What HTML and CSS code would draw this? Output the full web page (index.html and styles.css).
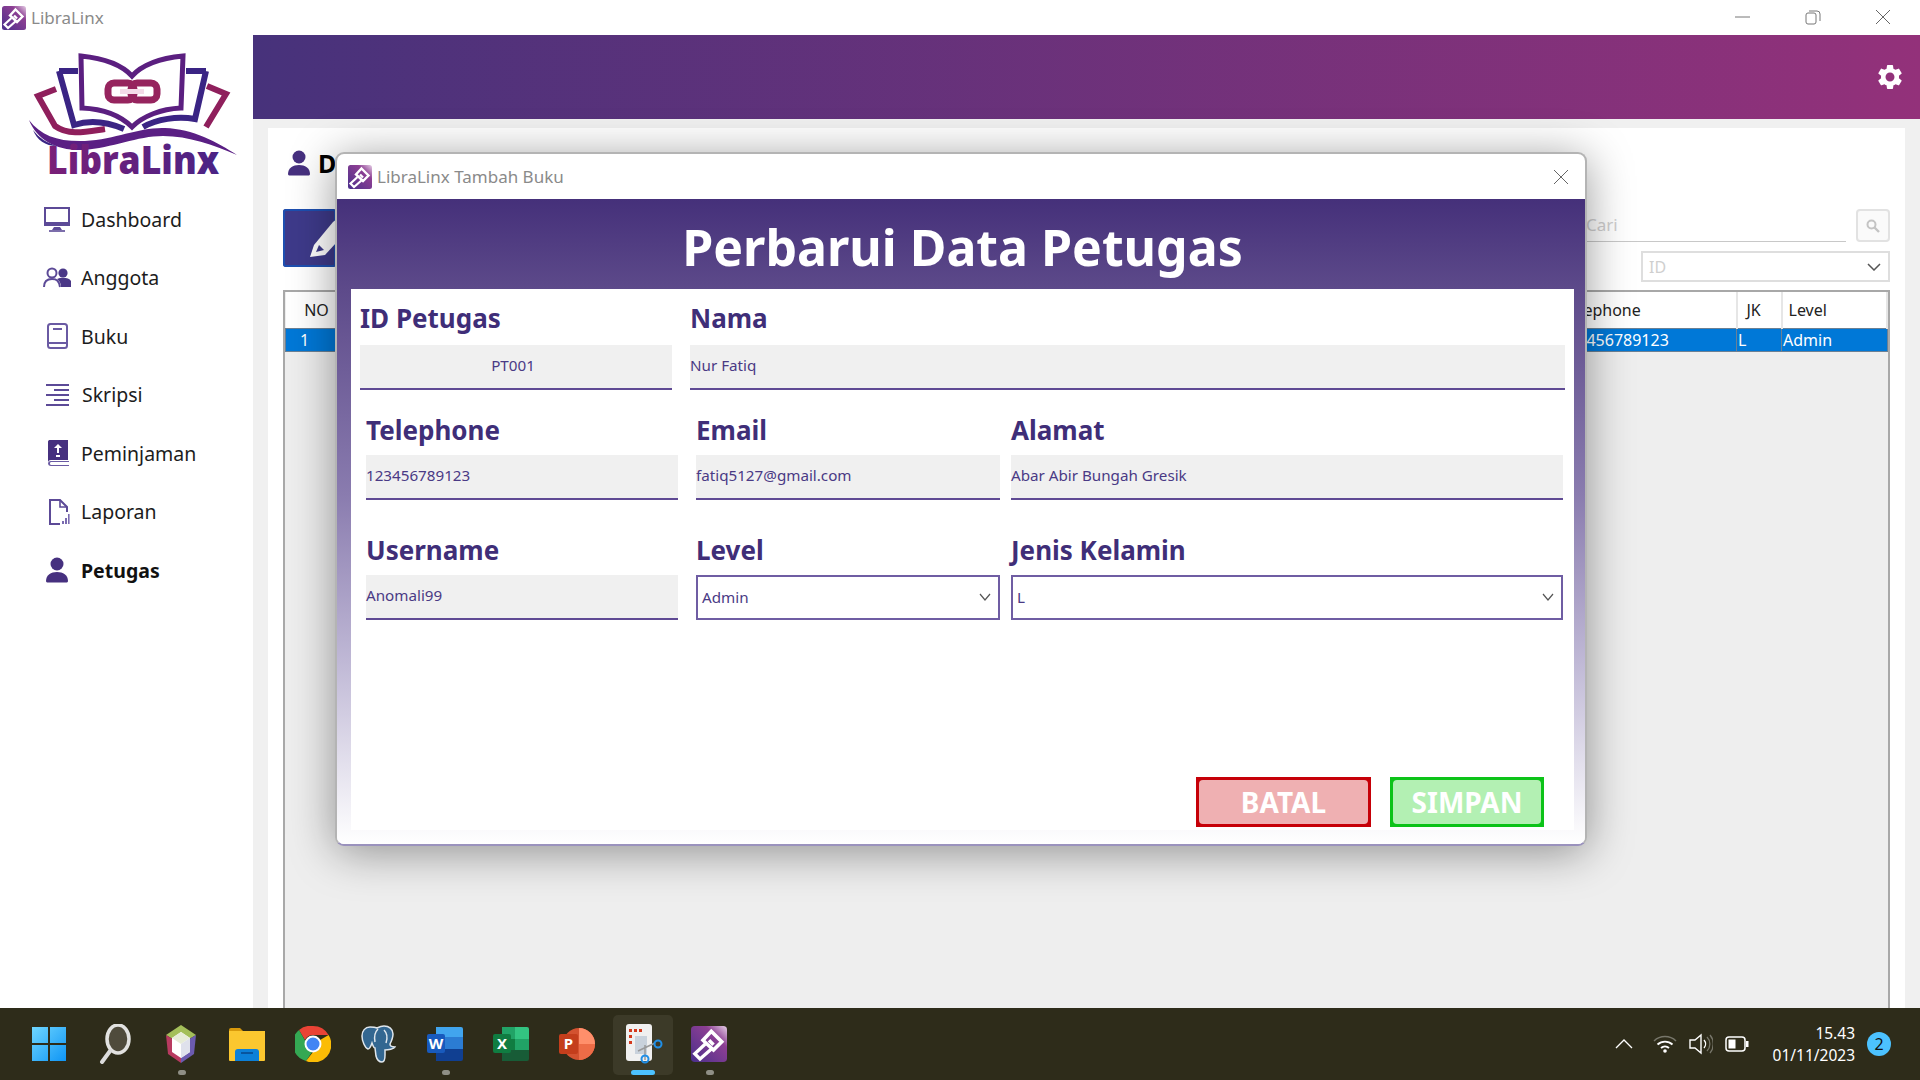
FILE: index.html
```html
<!DOCTYPE html>
<html lang="id">
<head>
    <meta charset="UTF-8">
    <meta name="viewport" content="width=device-width, initial-scale=1.0">
    <title>LibraLinx</title>
    <link rel="stylesheet" href="styles.css">
</head>
<body>

<svg class="defs" width="0" height="0">
    <defs>
        <linearGradient id="gradApp" x1="0" y1="1" x2="1" y2="0">
            <stop offset="0" stop-color="#4a2f8c"/>
            <stop offset=".7" stop-color="#8d3f93"/>
            <stop offset="1" stop-color="#e6cfe6"/>
        </linearGradient>
        <linearGradient id="gradWin" x1="0" y1="0" x2="1" y2="1">
            <stop offset="0" stop-color="#6fd6ff"/>
            <stop offset="1" stop-color="#0f95f5"/>
        </linearGradient>
        <symbol id="appIcon" viewBox="0 0 24 24">
            <rect width="24" height="24" rx="2.5" fill="url(#gradApp)"/>
            <path d="M13.500 3.500L20.500 10.500 15 16 8 9.500z" fill="none" stroke="#fff" stroke-width="2.400"/>
            <path d="M12 9.500l3 3" stroke="#fff" stroke-width="2.400"/>
            <path d="M9.500 12L2.500 18.500l3.500 3.500 8-7" fill="none" stroke="#fff" stroke-width="2.200"/>
        </symbol>
    </defs>
</svg>

<!-- Barra de titulo da janela -->
<div class="titlebar">
    <svg class="appIcon"><use href="#appIcon"/></svg>
    <span class="titleText">LibraLinx</span>
    <div class="winButtons">
        <svg width="16" height="16" viewBox="0 0 16 16"><path d="M0 8h15" stroke="#777" fill="none"/></svg>
        <svg width="16" height="16" viewBox="0 0 16 16"><rect x="1" y="4" width="10" height="11" rx="2" stroke="#777" fill="none"/><path d="M4 2h8a3 3 0 0 1 3 3v7" stroke="#777" fill="none"/></svg>
        <svg width="16" height="16" viewBox="0 0 16 16"><path d="M1 1l14 14M15 1L1 15" stroke="#666" fill="none"/></svg>
    </div>
</div>

<div class="app">
    <div class="sidebar">
        <svg class="logo" width="210" height="136" viewBox="28 50 210 136">
            <defs>
                <linearGradient id="gradLogo" x1="0" y1="0" x2="1" y2="0">
                    <stop offset="0" stop-color="#7a1f78"/>
                    <stop offset="1" stop-color="#4a2385"/>
                </linearGradient>
            </defs>
            <path d="M59 71h19M59 71l15 54c18-6 36-2 50 4M206 71h-20M206 71l-11 48c-18-3-38 0-52 8" fill="none" stroke="#3a2484" stroke-width="6"/>
            <path d="M56 89l-18 7 17 30c14 10 30 6 50 3M207 86l19 8-20 33" fill="none" stroke="#8f1f5c" stroke-width="6"/>
            <path d="M81 56c20 2 40 8 51 20 11-12 30-18 51-20l-2 52c-20 1-38 8-49 19-11-11-29-18-50-19z" fill="#fff" stroke="#5b1f80" stroke-width="5"/>
            <rect x="108" y="83" width="26" height="17" rx="6" fill="none" stroke="#96245e" stroke-width="7"/>
            <rect x="131" y="83" width="26" height="17" rx="6" fill="none" stroke="#96245e" stroke-width="7"/>
            <rect x="120" y="89" width="24" height="5" fill="#f4dbe8"/>
            <path d="M33 130c6 8 14 13 24 16-12 0-20-6-24-16z" fill="#3a2484"/>
            <path d="M29 120c12 16 30 22 56 21 32-2 54-14 80-13 28 1 52 14 72 27-24-10-48-19-74-19-26 0-50 12-80 14-26 1-46-10-54-30z" fill="#5a1f84"/>
            <text class="logoText" x="47" y="174" textLength="172" lengthAdjust="spacingAndGlyphs" fill="url(#gradLogo)">LibraLinx</text>
        </svg>
        <ul class="menu">
            <li>
                <svg class="menuIcon" viewBox="0 0 28 28"><path d="M2 3h24v17H2z" fill="none" stroke="#5c4a97" stroke-width="2"/><path d="M2 17h24v4H2zM9 25h10l-2-3h-6z" fill="#5c4a97"/><path d="M6 26h16" stroke="#5c4a97" stroke-width="1.600"/></svg>
                Dashboard
            </li>
            <li>
                <svg class="menuIcon" viewBox="0 0 28 28"><circle cx="9" cy="9" r="4.500" fill="none" stroke="#5c4a97" stroke-width="2"/><path d="M1 23c0-5 3-8 8-8s7 2 8 8" fill="none" stroke="#5c4a97" stroke-width="2"/><circle cx="20" cy="9" r="4.600" fill="#4a3787"/><path d="M14 15c4-2 12-2 14 2v6H18c0-3-1-6-4-8z" fill="#4a3787"/></svg>
                Anggota
            </li>
            <li>
                <svg class="menuIcon" viewBox="0 0 28 28"><rect x="5" y="2" width="19" height="24" rx="2.500" fill="none" stroke="#6a5aa3" stroke-width="2"/><path d="M10 7h9M5 21h19" stroke="#6a5aa3" stroke-width="2"/></svg>
                Buku
            </li>
            <li>
                <svg class="menuIcon" viewBox="0 0 28 28"><path d="M3 4h23M11 9h15M3 14h23M11 19h15M3 24h23" stroke="#5c4a97" stroke-width="2"/></svg>
                <span class="skripsi">Skripsi</span>
            </li>
            <li>
                <svg class="menuIcon" viewBox="0 0 28 28"><path d="M6 1h19v20H8a3 3 0 0 0-3 3V4a3 3 0 0 1 1-3z" fill="#46307f"/><path d="M5 24a3 3 0 0 1 3-2h18v1H8a1.600 1.600 0 0 0 0 3h18v1H8a3 3 0 0 1-3-3z" fill="#6a5aa3"/><path d="M15 5l4 4h-3v5h-2V9h-3zM13 16h4v2h-4z" fill="#fff"/></svg>
                Peminjaman
            </li>
            <li>
                <svg class="menuIcon" viewBox="0 0 28 28"><path d="M24 14V9l-7-7H7v24h10" fill="none" stroke="#5c4a97" stroke-width="2"/><path d="M17 2v7h7" fill="none" stroke="#5c4a97" stroke-width="1.600"/><path d="M19 23h2v3h-2zM22 20h2v6h-2zM25 16h1.600v10H25z" fill="#7a6bb0"/></svg>
                Laporan
            </li>
            <li class="ativo">
                <svg class="menuIcon" viewBox="0 0 28 28"><circle cx="14" cy="8" r="6.500" fill="#46307f"/><path d="M3 25c0-6 5-9 11-9s11 3 11 9c0 1-1 1.500-2 1.500H5c-1 0-2-.5-2-1.500z" fill="#46307f"/></svg>
                Petugas
            </li>
        </ul>
    </div>

    <div class="main">
        <div class="topbar">
            <svg class="gear" width="30" height="30" viewBox="0 0 24 24"><path fill="#fff" d="M19.140 12.940c.04-.3.06-.61.06-.94 0-.32-.02-.64-.07-.94l2.030-1.580a.49.49 0 0 0 .12-.61l-1.920-3.320a.488.488 0 0 0-.59-.22l-2.390.96c-.5-.38-1.030-.7-1.620-.94l-.36-2.540a.484.484 0 0 0-.48-.41h-3.840c-.24 0-.43.17-.47.41l-.36 2.540c-.59.24-1.130.57-1.620.94l-2.390-.96c-.22-.08-.47 0-.59.22L2.740 8.870c-.12.21-.08.47.12.61l2.030 1.580c-.05.3-.09.63-.09.94s.02.64.07.94l-2.030 1.580a.49.49 0 0 0-.12.61l1.920 3.320c.12.22.37.29.59.22l2.390-.96c.5.38 1.030.7 1.620.94l.36 2.540c.05.24.24.41.48.41h3.840c.24 0 .44-.17.47-.41l.36-2.540c.59-.24 1.130-.56 1.620-.94l2.390.96c.22.08.47 0 .59-.22l1.920-3.320c.12-.22.07-.47-.12-.61l-2.010-1.580zM12 15.600c-1.980 0-3.600-1.620-3.600-3.600s1.620-3.600 3.600-3.600 3.600 1.620 3.600 3.600-1.620 3.600-3.600 3.600z"/></svg>
        </div>
        <div class="content">
            <div class="panel">
                <div class="panelTitle">
                    <svg width="28" height="28" viewBox="0 0 28 28"><circle cx="14" cy="8" r="6.500" fill="#46307f"/><path d="M3 25c0-6 5-9 11-9s11 3 11 9c0 1-1 1.500-2 1.500H5c-1 0-2-.5-2-1.500z" fill="#46307f"/></svg>
                    Data Petugas
                </div>
                <div class="toolbar">
                    <div class="btnEdit">
                        <svg width="54" height="58" viewBox="0 0 54 58"><path d="M27 48L31 36 50 13 54 10V33L42 46z" fill="#fff"/><path d="M33 43l3-7 5 5z" fill="#3e3a8a"/></svg>
                    </div>
                    <div class="filtros">
                        <div class="searchRow">
                            <div class="searchInput">Cari</div>
                            <div class="searchBtn">
                                <svg width="14" height="14" viewBox="0 0 14 14"><circle cx="5.500" cy="5.500" r="4" fill="none" stroke="#c4c4c4" stroke-width="2"/><path d="M8.500 8.500l4.500 4.500" stroke="#c4c4c4" stroke-width="2.400"/></svg>
                            </div>
                        </div>
                        <div class="filterSelect">
                            ID
                            <svg width="14" height="8" viewBox="0 0 14 8"><path d="M1 1l6 6 6-6" fill="none" stroke="#555" stroke-width="1.500"/></svg>
                        </div>
                    </div>
                </div>
                <div class="tableWrap">
                    <table class="tabela">
                        <colgroup>
                            <col class="cNo"><col class="cId"><col class="cNama"><col class="cUser"><col class="cEmail"><col class="cAlamat"><col class="cTel"><col class="cJk"><col>
                        </colgroup>
                        <thead>
                            <!-- colunas do meio ficam atras do dialogo -->
                            <tr><th class="center">NO</th><th></th><th></th><th></th><th></th><th></th><th>Telephone</th><th class="thJk">JK</th><th>Level</th></tr>
                        </thead>
                        <tbody>
                            <tr><td class="center">1</td><td></td><td></td><td></td><td></td><td></td><td>123456789123</td><td>L</td><td>Admin</td></tr>
                        </tbody>
                    </table>
                </div>
            </div>
        </div>
    </div>
</div>

<!-- Janela de dialogo -->
<div class="dialog">
    <div class="dialogBar">
        <svg class="appIcon"><use href="#appIcon"/></svg>
        <span class="titleText">LibraLinx Tambah Buku</span>
        <svg class="dialogClose" width="16" height="16" viewBox="0 0 16 16"><path d="M1 1l14 14M15 1L1 15" stroke="#666" fill="none"/></svg>
    </div>
    <div class="dialogBody">
        <h1 class="dialogTitle">Perbarui Data Petugas</h1>
        <div class="form">
            <div class="row rowTop">
                <div class="field colId">
                    <label>ID Petugas</label>
                    <div class="input center">PT001</div>
                </div>
                <div class="field colNama">
                    <label>Nama</label>
                    <div class="input">Nur Fatiq</div>
                </div>
            </div>
            <div class="row rowMid">
                <div class="field colA">
                    <label>Telephone</label>
                    <div class="input">123456789123</div>
                </div>
                <div class="field colB">
                    <label>Email</label>
                    <div class="input">fatiq5127@gmail.com</div>
                </div>
                <div class="field colC">
                    <label>Alamat</label>
                    <div class="input">Abar Abir Bungah Gresik</div>
                </div>
            </div>
            <div class="row rowLow">
                <div class="field colA">
                    <label>Username</label>
                    <div class="input">Anomali99</div>
                </div>
                <div class="field colB">
                    <label>Level</label>
                    <div class="select">
                        Admin
                        <svg width="12" height="8" viewBox="0 0 12 8"><path d="M1 1l5 6 5-6" fill="none" stroke="#555" stroke-width="1.200"/></svg>
                    </div>
                </div>
                <div class="field colC">
                    <label>Jenis Kelamin</label>
                    <div class="select">
                        L
                        <svg width="12" height="8" viewBox="0 0 12 8"><path d="M1 1l5 6 5-6" fill="none" stroke="#555" stroke-width="1.200"/></svg>
                    </div>
                </div>
            </div>
            <div class="buttons">
                <button class="btn btnBatal" type="button"><span>BATAL</span></button>
                <button class="btn btnSimpan" type="button"><span>SIMPAN</span></button>
            </div>
        </div>
    </div>
</div>

<!-- Barra de tarefas -->
<div class="taskbar">
    <div class="taskItem">
        <svg width="36" height="36" viewBox="0 0 36 36"><path d="M1 1h16v16H1zM19 1h16v16H19zM1 19h16v16H1zM19 19h16v16H19z" fill="url(#gradWin)"/></svg>
    </div>
    <div class="taskItem">
        <svg width="36" height="40" viewBox="0 0 36 40"><ellipse cx="21" cy="15" rx="11" ry="14" fill="#4f4b3c" stroke="#e2e2e0" stroke-width="3.500"/><path d="M13 27L5 38" stroke="#dcdcdc" stroke-width="4" stroke-linecap="round"/></svg>
    </div>
    <div class="taskItem dot">
        <svg width="32" height="38" viewBox="0 0 32 38"><path d="M16 0l15 10-15 9L1 10z" fill="#a4bf5a"/><path d="M1 10l15 9v19L3 29z" fill="#b83a60"/><path d="M31 10L16 19v19l13-9z" fill="#6c5bb0"/><path d="M7 13l9-6 9 6v14l-9 6-9-6z" fill="#fff"/><path d="M7 13l9-6 9 6-9 6z" fill="#e7ecd8"/><path d="M25 13v14l-9 6V19z" fill="#dfe1ec"/></svg>
    </div>
    <div class="taskItem">
        <svg width="36" height="36" viewBox="0 0 36 36"><path d="M0 4a2 2 0 0 1 2-2h9l4 4h-15z" fill="#d99a0c"/><path d="M0 5h36v29a1 1 0 0 1-1 1H1a1 1 0 0 1-1-1z" fill="#fbc72f"/><path d="M6 35V26a3 3 0 0 1 3-3h18a3 3 0 0 1 3 3v9z" fill="#0c80d8"/><path d="M12 27h12" stroke="#08559e" stroke-width="2"/></svg>
    </div>
    <div class="taskItem">
        <svg width="36" height="36" viewBox="0 0 36 36"><path d="M18 0a18 18 0 0 1 15.600 9H18a9 9 0 0 0-8 5L4 4a18 18 0 0 1 14-4z" fill="#ea4335"/><path d="M4 4l8 14a7 7 0 0 0 5 8l-6 9A18 18 0 0 1 4 4z" fill="#34a853"/><path d="M33.600 9A18 18 0 0 1 11 35l7-9a8 8 0 0 0 7-12z" fill="#fbbc05"/><circle cx="18" cy="18" r="7.500" fill="#4285f4" stroke="#fff" stroke-width="2"/></svg>
    </div>
    <div class="taskItem">
        <svg width="36" height="38" viewBox="0 0 36 38"><path d="M9 2c-5 0-8 4-8 9 0 5 3 12 6 13 2 0 3-3 4-6 1 3 2 5 3 5l1 8c1 4 3 6 6 6 2 0 3-3 3-7v-5c3 0 9-1 10-3-3 0-5-1-5-3 2-4 3-7 3-10 0-5-4-8-9-8-3 0-5 1-7 2-2-1-4-1-7-1z" fill="#336791" stroke="#dfe6ec" stroke-width="1.500"/><path d="M17 4c-3 3-4 8-3 13M23 5c3 3 4 7 2 13" fill="none" stroke="#dfe6ec" stroke-width="1.500"/></svg>
    </div>
    <div class="taskItem dot">
        <svg width="36" height="36" viewBox="0 0 36 36"><path d="M9 1h25a2 2 0 0 1 2 2v8H9z" fill="#41a5ee"/><path d="M9 11h27v12H9z" fill="#2b7cd3"/><path d="M9 23h27v10a2 2 0 0 1-2 2H9z" fill="#103f91"/><rect x="0" y="8" width="18" height="19" rx="2" fill="#185abd"/><text class="appLetter" x="9" y="23" text-anchor="middle">W</text></svg>
    </div>
    <div class="taskItem">
        <svg width="36" height="36" viewBox="0 0 36 36"><path d="M9 1h13v12H9z" fill="#21a366"/><path d="M22 1h12a2 2 0 0 1 2 2v10H22z" fill="#33c481"/><path d="M9 13h13v11H9z" fill="#107c41"/><path d="M22 13h14v11H22z" fill="#21a366"/><path d="M9 24h27v9a2 2 0 0 1-2 2H9z" fill="#185c37"/><rect x="0" y="8" width="18" height="19" rx="2" fill="#107c41"/><text class="appLetter" x="9" y="23" text-anchor="middle">X</text></svg>
    </div>
    <div class="taskItem">
        <svg width="36" height="36" viewBox="0 0 36 36"><circle cx="20" cy="18" r="16" fill="#d35230"/><path d="M20 2a16 16 0 0 1 16 16H20z" fill="#ff8f6b"/><path d="M20 18h16a16 16 0 0 1-16 16z" fill="#ed6c47"/><rect x="0" y="8" width="19" height="20" rx="2" fill="#c43e1c"/><text class="appLetter" x="9.500" y="23" text-anchor="middle">P</text></svg>
    </div>
    <div class="taskItem active">
        <svg width="40" height="40" viewBox="0 0 40 40"><rect x="3" y="0" width="26" height="37" rx="3" fill="#f0f0f0"/><path d="M6 5h3v3H6zM11 5h3v3h-3zM16 5h3v3h-3zM6 11h3v3H6zM6 17h3v3H6z" fill="#d4391d"/><path d="M12 12h12v18H12z" fill="#c9d2dc"/><path d="M32 19L15 27M22 36V21" stroke="#999" stroke-width="1.500"/><circle cx="35" cy="20" r="3.500" fill="none" stroke="#1f8fe8" stroke-width="2"/><circle cx="22" cy="35" r="3.500" fill="none" stroke="#1f8fe8" stroke-width="2"/></svg>
    </div>
    <div class="taskItem dot">
        <svg width="36" height="36" viewBox="0 0 24 24"><use href="#appIcon"/></svg>
    </div>

    <div class="tray">
        <svg class="chevron" width="18" height="10" viewBox="0 0 18 10"><path d="M1 9l8-8 8 8" fill="none" stroke="#fff" stroke-width="1.300"/></svg>
        <svg width="24" height="20" viewBox="0 0 24 20"><path d="M1 7a16 16 0 0 1 22 0" fill="none" stroke="#77766a" stroke-width="1.500"/><path d="M4.500 10.500a11 11 0 0 1 15 0M8 14a6 6 0 0 1 8 0" fill="none" stroke="#fff" stroke-width="1.800"/><circle cx="12" cy="17" r="1.800" fill="#fff"/></svg>
        <svg width="24" height="22" viewBox="0 0 24 22"><path d="M1 7h5l6-5v18l-6-5H1z" fill="none" stroke="#fff" stroke-width="1.400"/><path d="M15 7a6 6 0 0 1 0 8" fill="none" stroke="#fff" stroke-width="1.400"/><path d="M18 4a10 10 0 0 1 0 14M21 2a14 14 0 0 1 0 18" fill="none" stroke="#77766a" stroke-width="1.300"/></svg>
        <svg width="24" height="16" viewBox="0 0 24 16"><rect x="1" y="1" width="19" height="14" rx="3" fill="none" stroke="#fff" stroke-width="1.500"/><rect x="3.500" y="3.500" width="7" height="9" fill="#fff"/><rect x="21" y="5" width="2.500" height="6" fill="#fff"/></svg>
        <div class="clock">
            <div>15.43</div>
            <div>01/11/2023</div>
        </div>
        <div class="badge">2</div>
    </div>
</div>

</body>
</html>
```

FILE: styles.css
```css
body {
    font-family: "Noto Sans", "Open Sans", sans-serif;
    margin: 0;
    padding: 0;
    width: 1920px;
    height: 1080px;
    overflow: hidden;
    position: relative;
    display: flex;
    flex-direction: column;
    background-color: #fff;
}

.defs {
    position: absolute;
}

.appIcon {
    width: 24px;
    height: 24px;
    flex: none;
}

.titleText {
    font-size: 17px;
    color: #8a8a8a;
}

/* barra de titulo */
.titlebar {
    height: 35px;
    flex: none;
    display: flex;
    align-items: center;
    padding-left: 2px;
    gap: 5px;
}

.winButtons {
    margin-left: auto;
    display: flex;
    gap: 54px;
    padding-right: 29px;
    padding-bottom: 2px;
}

.app {
    flex: 1;
    display: flex;
    min-height: 0;
}

/* menu lateral */
.sidebar {
    width: 253px;
    flex: none;
}

.logo {
    display: block;
    margin: 15px 0 4px 28px;
}

.logoText {
    font-family: "Open Sans", sans-serif;
    font-weight: 800;
    font-size: 38px;
}

.menu {
    list-style-type: none;
    margin: 0;
    padding: 0 0 0 43px;
}

.menu li {
    height: 58.5px;
    display: flex;
    align-items: center;
    gap: 10px;
    font-size: 19.500px;
    color: #1c1c1c;
}

.menu li.ativo {
    font-weight: 700;
    color: #111;
}

.menuIcon {
    width: 28px;
    height: 28px;
    flex: none;
}

.skripsi {
    margin-left: 1px;
}

.main {
    flex: 1;
    display: flex;
    flex-direction: column;
    min-width: 0;
}

.topbar {
    height: 84px;
    flex: none;
    display: flex;
    align-items: center;
    justify-content: flex-end;
    padding-right: 15px;
    background: linear-gradient(90deg, #47327b 0%, #93317a 100%);
}

.content {
    flex: 1;
    display: flex;
    min-height: 0;
    padding: 9px 15px 0;
    background-color: #f0f0f0;
}

.panel {
    flex: 1;
    display: flex;
    flex-direction: column;
    background-color: #fff;
    padding: 21px 15px 0;
}

.panelTitle {
    height: 28px;
    display: flex;
    align-items: center;
    gap: 5px;
    padding-left: 2px;
    margin-bottom: 32px;
    font-size: 25px;
    font-weight: 700;
    color: #000;
}

.toolbar {
    height: 81px;
    flex: none;
    display: flex;
    justify-content: space-between;
}

.btnEdit {
    width: 53px;
    height: 58px;
    background-color: #3e3a8a;
    box-shadow: inset 0 0 0 2px #1d4fb0;
    border-radius: 3px;
    overflow: hidden;
}

.filtros {
    width: 304px;
    display: flex;
    flex-direction: column;
    align-items: flex-end;
    gap: 9px;
}

.searchRow {
    display: flex;
    gap: 10px;
}

.searchInput {
    width: 260px;
    height: 32px;
    border-bottom: 1px solid #c8c8c8;
    font-size: 17px;
    line-height: 32px;
    color: #cfcfcf;
}

.searchBtn {
    width: 34px;
    height: 33px;
    box-sizing: border-box;
    display: flex;
    align-items: center;
    justify-content: center;
    background-color: #fafafa;
    border: 2px solid #e2e2e2;
    border-radius: 4px;
}

.filterSelect {
    width: 249px;
    height: 31px;
    box-sizing: border-box;
    display: flex;
    align-items: center;
    justify-content: space-between;
    padding: 1px 7px 0 6px;
    border: 2px solid #dedede;
    font-size: 16px;
    color: #cfcfcf;
}

.tableWrap {
    flex: 1;
    background-color: #eee;
    border: 2px solid #a8a8a8;
    border-bottom: none;
}

.tabela {
    width: 100%;
    table-layout: fixed;
    border-collapse: collapse;
    font-size: 16px;
}

.cNo { width: 63px; }
.cId { width: 120px; }
.cNama { width: 300px; }
.cUser { width: 200px; }
.cEmail { width: 320px; }
.cAlamat { width: 269px; }
.cTel { width: 179px; }
.cJk { width: 45px; }

.tabela th {
    height: 36px;
    padding: 0 4px;
    background-color: #fff;
    border-right: 2px solid #e6e6e6;
    font-weight: 400;
    text-align: left;
    color: #222;
}

.tabela th:last-child {
    padding-left: 6px;
}

.tabela th.center {
    text-align: center;
}

.tabela th.thJk {
    padding-left: 9px;
}

.tabela td {
    height: 22px;
    padding: 0 1px;
    background-color: #0078d7;
    border: 1px solid #6b8094;
    color: #fff;
    overflow: hidden;
    white-space: nowrap;
}

.tabela td.center {
    padding-right: 26px;
    text-align: center;
}

/* dialogo */
.dialog {
    position: absolute;
    left: 335px;
    top: 152px;
    width: 1252px;
    height: 694px;
    box-sizing: border-box;
    display: flex;
    flex-direction: column;
    background-color: #fff;
    border: 2px solid #b4b4b4;
    border-bottom-color: #9a92bd;
    border-radius: 9px;
    overflow: hidden;
    box-shadow: 0 6px 46px rgba(0, 0, 0, 0.4);
}

.dialogBar {
    height: 45px;
    flex: none;
    display: flex;
    align-items: center;
    gap: 5px;
    padding-left: 11px;
}

.dialogClose {
    margin-left: auto;
    margin-right: 16px;
}

.dialogBody {
    flex: 1;
    display: flex;
    flex-direction: column;
    padding: 0 11px 14px 14px;
    background: linear-gradient(180deg, #45307a 0%, #5d4a8a 14%, #8a7caf 46%, #c0b9d6 72%, #fff 100%);
}

.dialogTitle {
    height: 90px;
    margin: 0;
    flex: none;
    font-size: 50px;
    font-weight: 700;
    line-height: 96px;
    text-align: center;
    color: #fff;
}

.form {
    flex: 1;
    display: flex;
    flex-direction: column;
    background-color: #fff;
}

.row {
    display: flex;
}

.rowTop {
    padding: 13px 0 0 9px;
}

.rowMid {
    padding: 24px 0 0 15px;
}

.rowLow {
    padding: 34px 0 0 15px;
}

.field label {
    display: block;
    height: 32px;
    margin-bottom: 9px;
    font-size: 26px;
    font-weight: 700;
    line-height: 32px;
    color: #3f2e78;
}

.rowTop .field label {
    margin-bottom: 11px;
}

.colId { width: 312px; margin-right: 18px; }
.colNama { width: 875px; }
.colA { width: 312px; margin-right: 18px; }
.colB { width: 304px; margin-right: 11px; }
.colC { width: 552px; }

.input {
    height: 45px;
    box-sizing: border-box;
    display: flex;
    align-items: center;
    padding-bottom: 4px;
    background-color: #f0f0f0;
    border-bottom: 2px solid #5f4a94;
    font-size: 15.200px;
    color: #4a3a85;
}

.input.center {
    justify-content: center;
    padding-right: 6px;
}

.select {
    height: 45px;
    box-sizing: border-box;
    display: flex;
    align-items: center;
    justify-content: space-between;
    padding: 0 7px 2px 4px;
    border: 2px solid #6f5da3;
    font-size: 15.200px;
    color: #4a3a85;
}

.buttons {
    margin-top: auto;
    display: flex;
    justify-content: flex-end;
    gap: 19px;
    padding: 0 30px 3px 0;
}

.btn {
    height: 50px;
    padding: 3px;
    border: none;
    display: flex;
    font-family: "Noto Sans", "Open Sans", sans-serif;
    font-size: 28px;
    font-weight: 700;
    color: #fff;
    cursor: pointer;
}

.btn span {
    flex: 1;
    display: flex;
    align-items: center;
    justify-content: center;
    border-radius: 4px;
}

.btnBatal { width: 175px; background-color: #c60008; }
.btnBatal span { background-color: #efb0b2; }
.btnSimpan { width: 154px; background-color: #0cc318; }
.btnSimpan span { background-color: #b3f0b3; }

/* barra de tarefas */
.taskbar {
    height: 72px;
    flex: none;
    display: flex;
    padding-left: 16px;
    background-color: #2e2c1a;
    z-index: 1;
}

.taskItem {
    width: 66px;
    display: flex;
    align-items: center;
    justify-content: center;
    position: relative;
}

.taskItem.dot::after {
    content: "";
    position: absolute;
    left: 30px;
    bottom: 5px;
    width: 8px;
    height: 5px;
    border-radius: 3px;
    background-color: #8f8f86;
}

.taskItem.active::before {
    content: "";
    position: absolute;
    left: 3px;
    top: 7px;
    width: 60px;
    height: 60px;
    border-radius: 5px;
    background-color: #3c3a28;
}

.taskItem.active svg {
    position: relative;
}

.taskItem.active::after {
    content: "";
    position: absolute;
    left: 21px;
    bottom: 5px;
    width: 24px;
    height: 5px;
    border-radius: 3px;
    background-color: #4cc2ff;
}

.appLetter {
    font-family: "Noto Sans", sans-serif;
    font-size: 15px;
    font-weight: 700;
    fill: #fff;
}

.tray {
    margin-left: auto;
    display: flex;
    align-items: center;
    gap: 12px;
    padding-right: 29px;
}

.chevron {
    margin-right: 8px;
}

.clock {
    width: 88px;
    margin-left: 6px;
    font-size: 15.500px;
    line-height: 22px;
    text-align: right;
    color: #fff;
}

.badge {
    width: 24px;
    height: 24px;
    border-radius: 50%;
    display: flex;
    align-items: center;
    justify-content: center;
    background-color: #4cc2ff;
    font-size: 16px;
    color: #111;
}
```
